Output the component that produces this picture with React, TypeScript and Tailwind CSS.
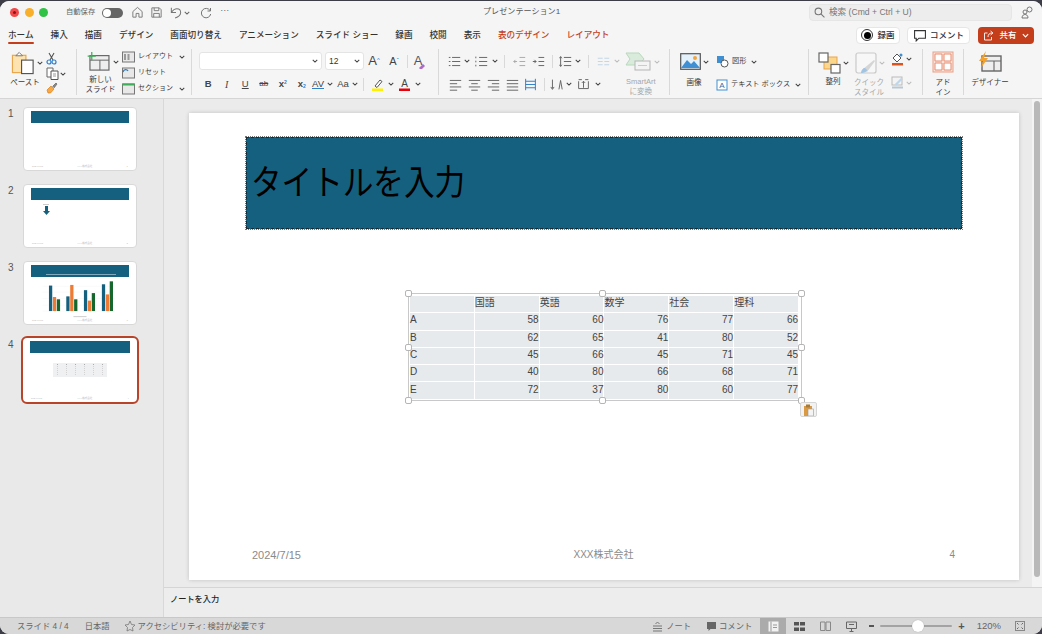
import React from "react";

const Chev = ({ c = "#444", s = 7 }: { c?: string; s?: number }) => (
  <svg width={s} height={s} viewBox="0 0 8 8" className="shrink-0">
    <path d="M1 2.5 4 5.5 7 2.5" fill="none" stroke={c} strokeWidth="1.4" />
  </svg>
);

const Sep = () => <div className="w-px shrink-0 bg-[#d9d9d9] my-[3px]" />;
const MiniSep = () => <div className="w-px h-[13px] bg-[#d9d9d9] shrink-0" />;

const Cell = ({ w, children }: { w: number; children?: React.ReactNode }) => (
  <div className="flex items-center justify-center shrink-0 h-[16px]" style={{ width: w }}>
    {children}
  </div>
);

const Label = ({ children, muted }: { children: React.ReactNode; muted?: boolean }) => (
  <div className={`text-[7.5px] leading-[9.5px] text-center whitespace-nowrap ${muted ? "text-[#a6a6a6]" : "text-[#3c3c3c]"}`}>
    {children}
  </div>
);

const Tab = ({ t, active, red }: { t: string; active?: boolean; red?: boolean }) => (
  <div className={`relative text-[8.6px] font-medium whitespace-nowrap ${red ? "text-[#c43e1c]" : "text-[#333]"}`}>
    {t}
    {active && <div className="absolute left-0 right-0 top-[13px] h-[2px] bg-[#c43e1c] rounded-full" />}
  </div>
);

const Lines = ({ a = "M2 3h12M2 7h8M2 11h12M2 14h8", c = "#666" }: { a?: string; c?: string }) => (
  <svg width="13" height="13" viewBox="0 0 16 16">
    <path d={a} stroke={c} strokeWidth="1.2" fill="none" />
  </svg>
);

const Paste = () => (
  <svg width="26" height="24" viewBox="0 0 26 24">
    <rect x="1.5" y="4" width="14" height="18" fill="#fde3b0" stroke="#e9a54c" strokeWidth="1.2" />
    <path d="M5 4.5 8.5 1 12 4.5Z" fill="#fff" stroke="#777" />
    <rect x="11" y="9" width="12" height="14" fill="#fff" stroke="#555" strokeWidth="1.2" />
  </svg>
);
const Scissors = () => (
  <svg width="11" height="13" viewBox="0 0 11 13">
    <path d="M3 1 7 8M8 1 4 8" stroke="#555" strokeWidth="1.1" />
    <circle cx="3" cy="10" r="2" fill="none" stroke="#2f7fc9" strokeWidth="1.2" />
    <circle cx="8" cy="10" r="2" fill="none" stroke="#2f7fc9" strokeWidth="1.2" />
  </svg>
);
const Copy = () => (
  <svg width="13" height="13" viewBox="0 0 13 13">
    <path d="M1 1h6v9H1z" fill="#fff" stroke="#666" />
    <path d="M5 4h7v8.500H5z" fill="#fff" stroke="#555" />
    <path d="M7 7h3M7 9h3" stroke="#999" />
  </svg>
);
const Brush = () => (
  <svg width="12" height="12" viewBox="0 0 12 12">
    <path d="M1 8 5 4 8 7 4.500 11H2Z" fill="#f6a945" stroke="#d97f1a" strokeWidth=".7" />
    <path d="M6.500 4.500 10 1l1 1-3 4" fill="#888" stroke="#666" strokeWidth=".7" />
  </svg>
);
const NewSlide = () => (
  <svg width="24" height="19" viewBox="0 0 26 21">
    <rect x="3" y="4" width="21" height="16" fill="#eee" stroke="#666" strokeWidth="1.3" />
    <path d="M3 9h21M14 9v11" stroke="#666" strokeWidth="1.1" />
    <path d="M5 0v9M0.500 4.500h9" stroke="#3fae5a" strokeWidth="1.4" />
  </svg>
);
const SlideSmall = ({ kind }: { kind: number }) => (
  <svg width="13" height="12" viewBox="0 0 13 12">
    <rect x=".5" y="1" width="12" height="10" fill="#e8e8e8" stroke="#777" />
    {kind === 0 && <path d="M6.500 3v6M3 3v6" stroke="#999" strokeWidth="2" />}
    {kind === 1 && <path d="M1 5C2 2 5 2 6 4" stroke="#2f7fc9" strokeWidth="1.3" fill="none" />}
    {kind === 2 && <path d="M.5 1.500h12" stroke="#3fae5a" strokeWidth="2" />}
  </svg>
);
const ImageIcon = () => (
  <svg width="21" height="18" viewBox="0 0 21 18">
    <rect x=".7" y=".7" width="19.600" height="15.600" fill="#e4f1fb" stroke="#555" strokeWidth="1.2" />
    <path d="M1 15 7 7l4 4 3-3 6 7Z" fill="#3f8fd2" />
    <circle cx="15" cy="5" r="2" fill="#f2a33a" />
  </svg>
);
const Shapes = () => (
  <svg width="13" height="13" viewBox="0 0 13 13">
    <rect x="1" y="1" width="7" height="7" fill="#3f8fd2" />
    <circle cx="8.500" cy="8.500" r="3.500" fill="#fff" stroke="#555" />
  </svg>
);
const TextBox = () => (
  <svg width="12" height="12" viewBox="0 0 12 12">
    <rect x="1" y="1" width="10" height="10" fill="#fff" stroke="#3f8fd2" />
    <text x="6" y="9" fontSize="8" textAnchor="middle" fill="#2f6fa8" fontFamily="Liberation Sans">A</text>
  </svg>
);
const SmartArt = () => (
  <svg width="27" height="19" viewBox="0 0 27 19">
    <path d="M1 1h13l5 6-5 6H1l4-6Z" fill="#d9ecdc" stroke="#b7d8bd" />
    <rect x="10" y="9" width="15" height="9" fill="#f4f4f4" stroke="#b5b5b5" />
    <path d="M13 13.500h9" stroke="#ccc" />
  </svg>
);
const Arrange = () => (
  <svg width="23" height="22" viewBox="0 0 23 22">
    <rect x="6" y="5" width="13" height="12" fill="#fcd68a" stroke="#e9a54c" />
    <rect x="1" y="1" width="9" height="9" fill="#fff" stroke="#666" strokeWidth="1.2" />
    <rect x="13" y="12.500" width="9" height="8.500" fill="#fff" stroke="#666" strokeWidth="1.2" />
  </svg>
);
const Quick = () => (
  <svg width="22" height="22" viewBox="0 0 22 22">
    <rect x="1" y="1" width="20" height="20" rx="2" fill="#f7f7f7" stroke="#c9c9c9" strokeWidth="1.2" />
    <path d="M8 17 19 8l1 1-8 11Z" fill="#d5d5d5" />
    <path d="M6 21c0-3 2-5 4-5l2 2c0 2-3 3-6 3Z" fill="#9fc4e4" />
  </svg>
);
const Fill = () => (
  <svg width="13" height="14" viewBox="0 0 13 14">
    <path d="M2 6 6 2l4 4-4 4Z" fill="#fff" stroke="#555" />
    <circle cx="10" cy="3" r="1.500" fill="#3f8fd2" />
    <rect x="1" y="11" width="11" height="2.500" fill="#d9541e" />
  </svg>
);
const Pen = () => (
  <svg width="13" height="13" viewBox="0 0 13 13">
    <rect x="1" y="1" width="10" height="8" fill="#f3f3f3" stroke="#bbb" />
    <path d="M4 8 10 2l1.500 1.500-6 6Z" fill="#bcd6ec" />
    <rect x="1" y="10.500" width="11" height="2" fill="#b9c7d3" />
  </svg>
);
const AddIn = () => (
  <svg width="22" height="22" viewBox="0 0 22 22">
    <rect x="1" y="1" width="20" height="20" fill="#fbe3da" stroke="#e7a08a" />
    <path d="M3 3h7v7H3zM12 3h7v7h-7zM3 12h7v7H3zM12 12h7v7h-7z" fill="#fff" stroke="#e58c70" />
  </svg>
);
const Designer = () => (
  <svg width="24" height="22" viewBox="0 0 24 22">
    <rect x="4" y="5" width="19" height="15" fill="#eee" stroke="#666" strokeWidth="1.4" />
    <path d="M4 10h19M16 10v10" stroke="#666" strokeWidth="1.100" />
    <path d="M8 0 1 10h4l-2 7 7-10H6Z" fill="#f3a12c" />
  </svg>
);

const tableRows = [
  ["A", 58, 60, 76, 77, 66],
  ["B", 62, 65, 41, 80, 52],
  ["C", 45, 66, 45, 71, 45],
  ["D", 40, 80, 66, 68, 71],
  ["E", 72, 37, 80, 60, 77],
];
const heads = ["", "国語", "英語", "数学", "社会", "理科"];

const Handle = ({ cls }: { cls: string }) => (
  <div className={`absolute w-[7px] h-[7px] rounded-[2px] bg-white border border-[#b5b5b5] ${cls}`} />
);

const Thumb = ({ n, selected, children }: { n: number; selected?: boolean; children?: React.ReactNode }) => (
  <div className="flex h-[64px] items-start">
    <div className="w-[23px] pl-[8px] text-[10px] leading-[11px] font-medium text-[#555] mt-[1px]">{n}</div>
    <div
      className={`relative w-[114px] h-[64px] bg-white rounded-[4px] flex flex-col px-[7px] pt-[3px] pb-[2px] ${
        selected ? "outline-2 outline-offset-0 outline-[#b8452a]" : "border border-[#d8d8d8]"
      }`}
    >
      <div className="relative h-[12px] bg-[#15607f] shrink-0">
        {n === 3 && <div className="absolute left-[15px] right-[13px] top-[9px] h-px bg-[#7fa9bc]" />}
      </div>
      <div className="flex-1 min-h-0">{children}</div>
      <div className="flex justify-between text-[2.500px] leading-[3px] text-[#bbb] px-[1px]">
        <span>2024/7/15</span>
        <span>XXX株式会社</span>
        <span>{n}</span>
      </div>
    </div>
  </div>
);

const Chart = () => (
  <svg viewBox="90 68 300 120" className="w-full h-full">
    {[74, 92, 112, 132, 150].map((y) => (
      <path key={y} d={`M125 ${y + 18}h222`} stroke="#eee" />
    ))}
    {[
      [145, 90, 125, 132],
      [198, 123, 88, 132],
      [252, 104, 136, 113],
      [307, 86, 117, 77],
    ].map((g) => (
      <g key={g[0]}>
        <rect x={g[0]} y={g[1]} width="10" height={168 - g[1]} fill="#15607f" />
        <rect x={g[0] + 12} y={g[2]} width="10" height={168 - g[2]} fill="#ee7b35" />
        <rect x={g[0] + 24} y={g[3]} width="10" height={168 - g[3]} fill="#17662d" />
      </g>
    ))}
    <path d="M220 185h40" stroke="#ccc" strokeWidth="3" />
  </svg>
);

export default function App() {
  return (
    <div className="w-[1042px] h-[634px] bg-[#3d3d48] overflow-hidden pt-px [font-family:'Liberation_Sans','Noto_Sans_CJK_JP',sans-serif]">
      <div className="w-full h-[633px] bg-[#ebebeb] rounded-[9px] overflow-hidden flex flex-col">
        {/* ribbon block */}
        <div className="bg-[#f5f5f5] border-b border-[#d5d5d5] shrink-0">
          {/* title bar */}
          <div className="relative h-[23px] flex items-center pl-[10px] pr-[8px]">
            <div className="flex gap-[5.500px]">
              <div className="w-[9px] h-[9px] rounded-full bg-[#f0484a] flex items-center justify-center">
                <div className="w-[3px] h-[3px] rounded-full bg-[#8c1216]" />
              </div>
              <div className="w-[9px] h-[9px] rounded-full bg-[#f8b02c]" />
              <div className="w-[9px] h-[9px] rounded-full bg-[#2fc244]" />
            </div>
            <div className="ml-[18px] text-[7.300px] text-[#666] whitespace-nowrap">自動保存</div>
            <div className="ml-[7px] w-[21px] h-[10px] rounded-full bg-[#666] flex items-center px-px">
              <div className="w-[8px] h-[8px] rounded-full bg-white" />
            </div>
            <div className="ml-[8px] flex items-center gap-[6px]">
              <svg width="13" height="13" viewBox="0 0 14 14">
                <path d="M2 12V6l5-4.500L12 6v6H8.500V8h-3v4Z" fill="none" stroke="#777" />
              </svg>
              <svg width="13" height="13" viewBox="0 0 14 14">
                <path d="M2 2h8l2 2v8H2Z" fill="none" stroke="#777" />
                <path d="M4.500 2v3h5V2M4 12V8h6v4" fill="none" stroke="#777" />
              </svg>
              <svg width="14" height="13" viewBox="0 0 14 14">
                <path d="M2 2v5h5M2 7c2-3 4-4 6-4 3 0 4 2 4 4 0 3-3 5-6 6" fill="none" stroke="#777" strokeWidth="1.100" />
              </svg>
            </div>
            <div className="ml-[1px]"><Chev c="#666" s={6} /></div>
            <div className="ml-[10px]">
              <svg width="12" height="12" viewBox="0 0 12 12">
                <path d="M10 3.500A4.700 4.700 0 1 0 10.700 7M10.500 1v3h-3" fill="none" stroke="#777" />
              </svg>
            </div>
            <div className="ml-[8px] text-[9px] leading-none text-[#666] mb-[4px]">···</div>
            <div className="absolute left-[483px] text-[8.100px] text-[#555] whitespace-nowrap">プレゼンテーション1</div>
            <div className="ml-auto flex items-center">
              <div className="w-[203px] h-[17px] rounded-[4px] bg-[#ededed] border border-[#e6e6e6] flex items-center pl-[4px] gap-[4px] text-[8.600px] text-[#777]">
                <svg width="11" height="11" viewBox="0 0 10 10">
                  <circle cx="4" cy="4" r="3" fill="none" stroke="#777" />
                  <path d="M6.500 6.500 9.500 9.500" stroke="#777" />
                </svg>
                検索 (Cmd + Ctrl + U)
              </div>
              <div className="ml-[9px]">
                <svg width="13" height="13" viewBox="0 0 13 13">
                  <circle cx="8.500" cy="3.500" r="2.500" fill="none" stroke="#777" />
                  <circle cx="4" cy="6" r="2" fill="none" stroke="#777" />
                  <path d="M1 12c0-3 2-3.500 3-3.500s3 .5 3 3.500Z" fill="none" stroke="#777" />
                </svg>
              </div>
            </div>
          </div>
          {/* tabs */}
          <div className="h-[22px] flex items-center pl-[8px] pr-[8px] gap-[17px]">
            <Tab t="ホーム" active />
            <Tab t="挿入" />
            <Tab t="描画" />
            <Tab t="デザイン" />
            <Tab t="画面切り替え" />
            <Tab t="アニメーション" />
            <Tab t="スライド ショー" />
            <Tab t="録画" />
            <Tab t="校閲" />
            <Tab t="表示" />
            <Tab t="表のデザイン" red />
            <Tab t="レイアウト" red />
            <div className="ml-auto flex items-center gap-[7px] text-[8.500px] font-medium text-[#333]">
              <div className="w-[44px] h-[17px] bg-white rounded-[4px] border border-[#e6e6e6] flex items-center justify-center gap-[4px]">
                <div className="w-[12px] h-[12px] rounded-full border border-[#333] flex items-center justify-center">
                  <div className="w-[7px] h-[7px] rounded-full bg-black" />
                </div>
                録画
              </div>
              <div className="w-[63px] h-[17px] bg-white rounded-[4px] border border-[#e6e6e6] flex items-center justify-center gap-[3px]">
                <svg width="14" height="13" viewBox="0 0 12 12">
                  <path d="M1 1.500h10v7H5L2.500 11V8.500H1Z" fill="none" stroke="#333" />
                </svg>
                コメント
              </div>
              <div className="w-[56px] h-[17px] bg-[#c43e1c] rounded-[4px] text-white flex items-center justify-center gap-[5px] ml-px">
                <svg width="11" height="11" viewBox="0 0 11 11">
                  <path d="M8.500 7v3h-7V3h3M5 7c0-2.500 1.500-4 4-4M7.500 1 10 3 7.500 5" fill="none" stroke="#fff" strokeWidth=".9" />
                </svg>
                共有
                <Chev c="#fff" s={7} />
              </div>
            </div>
          </div>
          {/* ribbon */}
          <div className="h-[52px] flex">
            {/* clipboard */}
            <div className="w-[76px] shrink-0 flex pl-[11px] pt-[5px]">
              <div className="w-[32px] flex flex-col">
                <div className="flex items-center gap-[1px]"><Paste /><Chev s={6} /></div>
                <div className="mt-[3px] -ml-[4px]"><Label>ペースト</Label></div>
              </div>
              <div className="ml-[2px] flex flex-col items-start gap-[2px] pl-[1px] pt-px">
                <Scissors />
                <div className="flex items-center gap-[1px]"><Copy /><Chev s={6} /></div>
                <Brush />
              </div>
            </div>
            <Sep />
            {/* slides */}
            <div className="w-[114px] shrink-0 flex pl-[8px] pt-[6px]">
              <div className="w-[35px] flex flex-col items-center">
                <div className="flex items-center gap-[2px]"><NewSlide /><Chev s={6} /></div>
                <div className="mt-[4px] -ml-[4px]"><Label>新しい<br />スライド</Label></div>
              </div>
              <div className="ml-[2px] -mt-[2px] flex flex-col text-[7px] text-[#3c3c3c] gap-[3px] whitespace-nowrap">
                <div className="flex items-center gap-[3px] h-[13px]"><SlideSmall kind={0} />レイアウト<span className="ml-[3px]"><Chev s={6} /></span></div>
                <div className="flex items-center gap-[3px] h-[13px]"><SlideSmall kind={1} />リセット</div>
                <div className="flex items-center gap-[3px] h-[13px]"><SlideSmall kind={2} />セクション<span className="ml-[3px]"><Chev s={6} /></span></div>
              </div>
            </div>
            <Sep />
            {/* font */}
            <div className="w-[246px] shrink-0 flex flex-col pl-[7px] pt-[6px] gap-[6px]">
              <div className="flex items-center h-[18px]">
                <div className="w-[123px] h-[18px] bg-white rounded-[3px] border border-[#e4e4e4] flex items-center justify-end pr-[3px]"><Chev s={6} /></div>
                <div className="ml-[3px] w-[39px] h-[18px] bg-white rounded-[3px] border border-[#e4e4e4] flex items-center justify-between px-[3px] text-[8.500px] text-[#333]">12<Chev s={6} /></div>
                <Cell w={20}><span className="text-[13px] text-[#444]">A<sup className="text-[6px] text-[#2f7fc9]">^</sup></span></Cell>
                <Cell w={20}><span className="text-[11px] text-[#444]">A<sup className="text-[6px] text-[#2f7fc9]">ˇ</sup></span></Cell>
                <div className="ml-[3px]"><MiniSep /></div>
                <Cell w={20}>
                  <span className="relative text-[13px] text-[#555]">A
                    <svg width="8" height="7" viewBox="0 0 8 7" className="absolute -right-[4px] bottom-[1px]"><path d="M1 5 5 1l2 2-3 3H2Z" fill="#b06ac6" /></svg>
                  </span>
                </Cell>
              </div>
              <div className="flex items-center h-[16px] text-[#444]">
                <Cell w={18.500}><b className="text-[9.500px]">B</b></Cell>
                <Cell w={18.500}><i className="text-[10px] [font-family:'Liberation_Serif',serif]">I</i></Cell>
                <Cell w={18.500}><u className="text-[9.500px]">U</u></Cell>
                <Cell w={18.500}><span className="text-[8px] line-through">ab</span></Cell>
                <Cell w={19.500}><span className="text-[9.500px] font-bold">x<sup className="text-[5px] text-[#2f7fc9]">2</sup></span></Cell>
                <Cell w={18.500}><span className="text-[9.500px] font-bold">x<sub className="text-[5px] text-[#2f7fc9]">2</sub></span></Cell>
                <Cell w={14}><span className="text-[9.500px] leading-[8px] border-b border-[#2f7fc9]">AV</span></Cell>
                <Cell w={9}><Chev s={6} /></Cell>
                <Cell w={18}><span className="text-[9.500px]">Aa</span></Cell>
                <Cell w={6}><Chev s={6} /></Cell>
                <div className="mx-[5px]"><MiniSep /></div>
                <Cell w={16}>
                  <svg width="13" height="13" viewBox="0 0 13 13"><path d="M4 8 9 2l2 1.500L6 9.500Z" fill="#fff" stroke="#555" /><rect x="1" y="10.500" width="11" height="2.500" fill="#fff000" /></svg>
                </Cell>
                <Cell w={11}><Chev s={6} /></Cell>
                <Cell w={17}>
                  <svg width="13" height="13" viewBox="0 0 13 13"><text x="6.500" y="9" fontSize="10" textAnchor="middle" fill="#444" fontFamily="Liberation Sans">A</text><rect x="1" y="10.500" width="11" height="2.500" fill="#e8000b" /></svg>
                </Cell>
                <Cell w={9}><Chev s={6} /></Cell>
              </div>
            </div>
            <Sep />
            {/* paragraph */}
            <div className="w-[230px] shrink-0 flex pl-[7px]">
              <div className="w-[179px] flex flex-col pt-[6px] gap-[6px]">
                <div className="flex items-center h-[18px]">
                  <Cell w={16}><Lines a="M5 3h10M5 8h10M5 13h10M1 3h2M1 8h2M1 13h2" /></Cell>
                  <Cell w={10}><Chev s={6} /></Cell>
                  <Cell w={18}><Lines a="M5 3h10M5 8h10M5 13h10M1 2v2M1 7v2M1 12v2" /></Cell>
                  <Cell w={9}><Chev s={6} /></Cell>
                  <div className="mx-[5px]"><MiniSep /></div>
                  <Cell w={19}><Lines c="#aaa" a="M8 3h7M8 8h7M8 13h7M1 8h4M3 6 1 8l2 2" /></Cell>
                  <Cell w={18}><Lines a="M8 3h7M8 8h7M8 13h7M1 8h4M3 6l2 2-2 2" /></Cell>
                  <div className="mx-[5px]"><MiniSep /></div>
                  <Cell w={15}><Lines a="M6 3h9M6 8h9M6 13h9M2 2v12M0.500 4 2 2l1.500 2M0.500 12 2 14l1.500-2" /></Cell>
                  <Cell w={10}><Chev s={6} /></Cell>
                  <div className="mx-[5px]"><MiniSep /></div>
                  <Cell w={18}><Lines c="#c3d6e6" a="M1 4h6M9 4h6M1 8h6M9 8h6M1 12h6M9 12h6" /></Cell>
                  <Cell w={9}><Chev c="#bbb" s={6} /></Cell>
                </div>
                <div className="flex items-center h-[16px]">
                  <Cell w={19}><Lines a="M1 3h14M1 7h9M1 11h14M1 15h9" /></Cell>
                  <Cell w={18.500}><Lines a="M1 3h14M4 7h8M1 11h14M4 15h8" /></Cell>
                  <Cell w={19}><Lines a="M1 3h14M6 7h9M1 11h14M6 15h9" /></Cell>
                  <Cell w={19}><Lines a="M1 3h14M1 7h14M1 11h14M1 15h14" /></Cell>
                  <Cell w={18}><Lines c="#2f7fc9" a="M2 1v14M14 1v14M2 4h12M2 8h12M2 12h12" /></Cell>
                  <div className="mx-[4px]"><MiniSep /></div>
                  <Cell w={16}><Lines a="M3 2v11M1 11l2 3 2-3M11 14 13 3l2 11" /></Cell>
                  <Cell w={9}><Chev s={6} /></Cell>
                  <Cell w={20}><Lines a="M2 4v9h12V4M2 2h4M10 2h4M8 4v8M6 6l2-2 2 2" /></Cell>
                  <Cell w={9}><Chev s={6} /></Cell>
                </div>
              </div>
              <div className="flex flex-col items-start pt-[6px]">
                <div className="flex items-center gap-[2px]"><SmartArt /><Chev c="#bbb" s={6} /></div>
                <div className="mt-[6px] ml-[1px]"><Label muted>SmartArt<br />に変換</Label></div>
              </div>
            </div>
            <Sep />
            {/* insert */}
            <div className="w-[138px] shrink-0 flex pl-[10px] pt-[7px]">
              <div className="w-[36px] flex flex-col">
                <div className="flex items-center gap-[2px]"><ImageIcon /><Chev s={6} /></div>
                <div className="mt-[7px] -ml-[8px]"><Label>画像</Label></div>
              </div>
              <div className="flex flex-col text-[7.200px] text-[#3c3c3c] whitespace-nowrap gap-[10px] pt-[2px]">
                <div className="flex items-center gap-[3px] h-[13px]"><Shapes />図形<span className="ml-[2px]"><Chev s={6} /></span></div>
                <div className="flex items-center gap-[3px] h-[13px]"><TextBox />テキスト ボックス<span className="ml-[2px]"><Chev s={6} /></span></div>
              </div>
            </div>
            <Sep />
            {/* arrange */}
            <div className="w-[113px] shrink-0 flex pl-[9px] pt-[6px]">
              <div className="w-[37px] flex flex-col">
                <div className="flex items-center gap-[2px]"><Arrange /><Chev s={6} /></div>
                <div className="mt-[3px] -ml-[7px]"><Label>整列</Label></div>
              </div>
              <div className="w-[35px] flex flex-col">
                <div className="flex items-center gap-[2px]"><Quick /><Chev c="#bbb" s={6} /></div>
                <div className="mt-[4px] -ml-[7px]"><Label muted>クイック<br />スタイル</Label></div>
              </div>
              <div className="flex flex-col gap-[10px] pl-[1px]">
                <div className="flex items-center gap-[2px]"><Fill /><Chev s={6} /></div>
                <div className="flex items-center gap-[2px]"><Pen /><Chev c="#bbb" s={6} /></div>
              </div>
            </div>
            <Sep />
            <div className="w-[40px] shrink-0 flex flex-col items-center pt-[5px]">
              <AddIn />
              <div className="mt-[5px]"><Label>アド<br />イン</Label></div>
            </div>
            <Sep />
            <div className="w-[60px] shrink-0 flex flex-col items-center pt-[5px] pr-[8px]">
              <Designer />
              <div className="mt-[5px]"><Label>デザイナー</Label></div>
            </div>
          </div>
        </div>

        {/* body */}
        <div className="flex-1 min-h-0 flex">
          <div className="w-[164px] shrink-0 bg-[#e9e9e9] border-r border-[#d8d8d8] flex flex-col gap-[13px] pt-[8px]">
            <Thumb n={1} />
            <Thumb n={2}>
              <div className="ml-[10px] mt-[4px] w-[10px] flex flex-col items-center">
                <div className="w-[6px] h-[1px] bg-[#ccc]" />
                <svg width="7" height="9" viewBox="0 0 7 9" className="mt-[1px]"><path d="M2 0h3v5h2L3.500 9 0 5h2Z" fill="#15607f" /></svg>
              </div>
            </Thumb>
            <Thumb n={3}><Chart /></Thumb>
            <Thumb n={4} selected>
              <div className="ml-[23px] mt-[10px] w-[54px] h-[14px] bg-[#eff0f2] grid grid-cols-6 gap-x-[2px] px-[1px] content-start">
                {Array.from({ length: 36 }).map((_, i) => (
                  <div key={i} className={`h-px mt-px mx-[3px] ${i < 6 ? "bg-[#aaa]" : "bg-[#d2d2d2]"}`} />
                ))}
              </div>
            </Thumb>
          </div>
          <div className="flex-1 min-w-0 flex flex-col">
            <div className="flex-1 min-h-0 flex">
              <div className="flex-1 min-w-0 pl-[25px] pt-[14px]">
                {/* slide */}
                <div className="w-[830px] h-[467px] bg-white shadow-[0_0_4px_rgba(0,0,0,0.18)] flex flex-col pl-[57px] pr-[57px] pt-[24px] pb-[17px] text-[#333]">
                  <div className="h-[92px] shrink-0 bg-[#15607f] border border-dashed border-[#1a2a33] flex items-center pl-[4px] outline-1 outline-dotted outline-[#777]">
                    <div className="text-[30.600px] text-black scale-y-[1.14] origin-left whitespace-nowrap leading-none">タイトルを入力</div>
                  </div>
                  <div className="relative mt-[64px] ml-[162px] w-[394px] h-[108px] border border-[#c8c8c8] py-[1px]">
                    <table className="w-[390px] table-fixed border-collapse text-[10px] text-[#444]">
                      <tbody>
                        <tr className="h-[17.300px]">
                          {heads.map((h, i) => (
                            <td key={i} className="bg-[#e7eaed] border border-white p-0 pb-[2px] leading-none whitespace-nowrap">{h}</td>
                          ))}
                        </tr>
                        {tableRows.map((r) => (
                          <tr key={r[0]} className="h-[17.300px]">
                            {r.map((v, i) => (
                              <td key={i} className={`bg-[#e7eaed] border border-white p-0 pb-[2px] leading-none ${i ? "text-right" : "text-left"}`}>{v}</td>
                            ))}
                          </tr>
                        ))}
                      </tbody>
                    </table>
                    <Handle cls="-left-[4px] -top-[4px]" />
                    <Handle cls="left-[190px] -top-[4px]" />
                    <Handle cls="-right-[4px] -top-[4px]" />
                    <Handle cls="-left-[4px] top-[50px]" />
                    <Handle cls="-right-[4px] top-[50px]" />
                    <Handle cls="-left-[4px] -bottom-[4px]" />
                    <Handle cls="left-[190px] -bottom-[4px]" />
                    <Handle cls="-right-[4px] -bottom-[4px]" />
                    <div className="absolute -right-[16px] -bottom-[17px] w-[17px] h-[15px] bg-[#f2f2f2] border border-[#d5d5d5] rounded-[2px] flex items-center justify-center">
                      <svg width="11" height="12" viewBox="0 0 11 12"><rect x="1" y="2" width="8" height="10" fill="#d99a45" /><rect x="3" y=".5" width="4" height="3" fill="#aa7a35" /><rect x="5" y="5" width="5.500" height="7" fill="#f4f4f4" stroke="#999" strokeWidth=".6" /></svg>
                    </div>
                  </div>
                  <div className="mt-auto flex items-center justify-between text-[10px] text-[#8a8a8a] pl-[6px] pr-[7px]">
                    <span className="w-[200px] text-[11px]">2024/7/15</span>
                    <span>XXX株式会社</span>
                    <span className="w-[200px] text-right">4</span>
                  </div>
                </div>
              </div>
              <div className="w-[10px] shrink-0 bg-[#f4f4f4] flex justify-center pt-[2px] pb-[10px]">
                <div className="w-[6px] h-full bg-[#b9b9b9] rounded-full" />
              </div>
            </div>
            <div className="h-[30px] shrink-0 border-t border-[#d5d5d5] bg-[#ededed] pl-[6px] pt-[6px] text-[8.200px] font-medium text-[#222]">ノートを入力</div>
          </div>
        </div>

        {/* status */}
        <div className="h-[17px] shrink-0 bg-[#d8d8d8] border-t border-[#c8c8c8] flex items-center text-[8.300px] text-[#666] pl-[17px] whitespace-nowrap">
          <span>スライド 4 / 4</span>
          <span className="ml-[16px]">日本語</span>
          <span className="ml-[14px] flex items-center gap-[2px]">
            <svg width="12" height="12" viewBox="0 0 12 12"><path d="M6 1 7.500 4.500 11 5 8.500 7.500 9 11 6 9.500 3 11 3.500 7.500 1 5 4.500 4.500Z" fill="none" stroke="#777" strokeWidth=".8" /></svg>
            アクセシビリティ: 検討が必要です
          </span>
          <div className="ml-auto flex items-center h-full">
            <span className="flex items-center gap-[3px]">
              <svg width="11" height="11" viewBox="0 0 11 11"><path d="M1 5h9M1 7.500h9M1 10h9M3.500 3 5.500 1 7.500 3" stroke="#777" fill="none" /></svg>
              ノート
            </span>
            <span className="ml-[15px] flex items-center gap-[2px]">
              <svg width="11" height="11" viewBox="0 0 11 11"><path d="M1 1h9v7H4.500L2.500 10V8H1Z" fill="#666" /></svg>
              コメント
            </span>
            <div className="ml-[8px] w-[26px] h-full bg-[#ababab] flex items-center justify-center">
              <svg width="11" height="11" viewBox="0 0 11 11"><rect x=".5" y=".5" width="10" height="10" fill="#f2f2f2" /><path d="M3 .5v10M5 4h4M5 6.500h4" stroke="#999" /></svg>
            </div>
            <div className="w-[26px] flex justify-center">
              <svg width="11" height="9" viewBox="0 0 11 9"><path d="M0 0h5v3.500H0zM6 0h5v3.500H6zM0 5.500h5V9H0zM6 5.500h5V9H6z" fill="#555" /></svg>
            </div>
            <div className="w-[26px] flex justify-center">
              <svg width="11" height="10" viewBox="0 0 11 10"><path d="M.5 1h4.500v8.500H.5zM6 1h4.500v8.500H6z" fill="none" stroke="#888" /></svg>
            </div>
            <div className="w-[26px] flex justify-center">
              <svg width="11" height="11" viewBox="0 0 11 11"><path d="M.5 1h10v6.500H.5zM5.500 7.500V10M3.500 10.500h4M3 3.500h5" fill="none" stroke="#666" /></svg>
            </div>
            <div className="ml-[5px] w-[5px] h-[1.500px] bg-[#555]" />
            <div className="ml-[6px] w-[72px] h-[2px] bg-[#a3a3a3] rounded-full relative">
              <div className="absolute left-[32px] -top-[5px] w-[12px] h-[12px] rounded-full bg-white shadow-[0_0_1px_rgba(0,0,0,0.3)]" />
            </div>
            <span className="ml-[6px] text-[11px] leading-none font-bold text-[#555]">+</span>
            <span className="ml-[12px] text-[9.500px]">120%</span>
            <div className="ml-[14px] mr-[17px]">
              <svg width="10" height="10" viewBox="0 0 10 10"><rect x=".5" y=".5" width="9" height="9" fill="none" stroke="#888" /><path d="M2 2l1.500 1.500M8 2 6.500 3.500M2 8l1.500-1.500M8 8 6.500 6.500" stroke="#666" /></svg>
            </div>
          </div>
        </div>
      </div>
    </div>
  );
}
